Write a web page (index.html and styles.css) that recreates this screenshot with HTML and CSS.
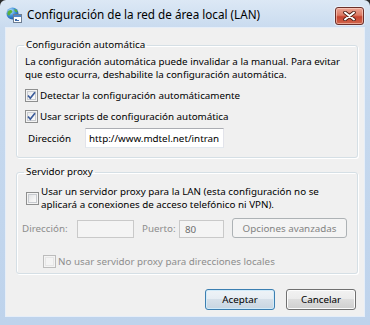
FILE: index.html
```html
<!DOCTYPE html>
<html lang="es">
<head>
<meta charset="utf-8">
<title>Configuración de la red de área local (LAN)</title>
<link rel="stylesheet" href="styles.css">
</head>
<body>
<div class="window">
  <div class="titlebar">
    <svg class="app-icon" width="16" height="16" viewBox="0 0 16 16">
      <defs>
        <radialGradient id="gl" cx="0.35" cy="0.3" r="0.8">
          <stop offset="0" stop-color="#bfe6ff"/>
          <stop offset="0.5" stop-color="#3d8fd8"/>
          <stop offset="1" stop-color="#1a4f9c"/>
        </radialGradient>
      </defs>
      <circle cx="6.5" cy="6.5" r="6" fill="url(#gl)"/>
      <path d="M3 3.5 C4.5 2.5 6 3 6.5 4.5 C6 6 4.5 6 4 7.5 C3.5 9 2.5 8.5 1.5 7.5 C1.2 6 1.8 4.5 3 3.5Z" fill="#5cb03c"/>
      <path d="M8.5 2 C10 2 11.5 3.5 11.5 5 C10.5 5.5 9.5 5 8.5 4 Z" fill="#5cb03c"/>
      <rect x="7.5" y="7.5" width="8" height="8" fill="#fdfdfd" stroke="#6f7f93"/>
      <rect x="8" y="8" width="7" height="2" fill="#4f86c9"/>
      <rect x="9" y="12" width="2" height="1" fill="#3d6aa8"/>
      <rect x="9" y="13" width="4" height="1" fill="#3d6aa8"/>
    </svg>
    <span class="title">Configuración de la red de área local (LAN)</span>
    <span class="close">
      <svg width="13" height="10" viewBox="0 0 13 10">
        <path d="M2 1.5 L11 8.5 M11 1.5 L2 8.5" stroke="#4a1c12" stroke-width="3.6" stroke-linecap="round"/>
        <path d="M2 1.5 L11 8.5 M11 1.5 L2 8.5" stroke="#ffffff" stroke-width="2" stroke-linecap="round"/>
      </svg>
    </span>
  </div>
  <div class="client">
    <fieldset class="group group-auto">
      <legend>Configuración automática</legend>
      <p class="desc">La configuración automática puede invalidar a la manual. Para evitar<br>que esto ocurra, deshabilite la configuración automática.</p>
      <div class="check check-detect">
        <span class="box checked"><svg width="9" height="9" viewBox="0 0 9 9"><path d="M1 4.5 L3.3 7.2 L8 1.2" fill="none" stroke="#3b5b9a" stroke-width="1.7"/></svg></span>
        <span class="check-text">Detectar la configuración automáticamente</span>
      </div>
      <div class="check check-scripts">
        <span class="box checked"><svg width="9" height="9" viewBox="0 0 9 9"><path d="M1 4.5 L3.3 7.2 L8 1.2" fill="none" stroke="#3b5b9a" stroke-width="1.7"/></svg></span>
        <span class="check-text">Usar scripts de configuración automática</span>
      </div>
      <div class="addr-row">
        <span class="addr-label">Dirección</span>
        <span class="textbox addr-box">http://www.mdtel.net/intran</span>
      </div>
    </fieldset>
    <fieldset class="group group-proxy">
      <legend>Servidor proxy</legend>
      <div class="check proxy-check">
        <span class="box"></span>
        <span class="check-text">Usar un servidor proxy para la LAN (esta configuración no se<br>aplicará a conexiones de acceso telefónico ni VPN).</span>
      </div>
      <div class="proxy-row">
        <span class="dis-label lbl-dir">Dirección:</span>
        <span class="textbox disabled tb-dir"></span>
        <span class="dis-label lbl-port">Puerto:</span>
        <span class="textbox disabled tb-port">80</span>
        <span class="btn btn-disabled btn-adv">Opciones avanzadas</span>
      </div>
      <div class="check local-check">
        <span class="box box-disabled"></span>
        <span class="check-text dis-text">No usar servidor proxy para direcciones locales</span>
      </div>
    </fieldset>
    <div class="buttons">
      <span class="btn btn-default">Aceptar</span>
      <span class="btn">Cancelar</span>
    </div>
  </div>
</div>
</body>
</html>
```
FILE: styles.css
```css
html, body {
  margin: 0;
  padding: 0;
  background: #2b2b2b;
}
body {
  font-family: "Noto Sans", "Open Sans", sans-serif;
  font-size: 9.8px;
  color: #000;
}
.window {
  width: 370px;
  height: 325px;
  border-radius: 6px 6px 0 0;
  background: linear-gradient(to bottom, #dce8f5 0px, #c9dbef 28px, #bed3ec 100%);
  box-sizing: border-box;
  overflow: hidden;
}
.titlebar {
  height: 28px;
  display: flex;
  align-items: center;
  padding-left: 6px;
}
.app-icon {
  flex: none;
  margin-top: 1px;
}
.title {
  margin-left: 5px;
  font-size: 11.7px;
  color: #000;
  flex: 1;
  white-space: nowrap;
}
.close {
  width: 29px;
  height: 18px;
  box-sizing: border-box;
  margin-right: 6px;
  margin-top: 4px;
  border: 1px solid #6b2f2a;
  border-radius: 3px;
  background: linear-gradient(to bottom, #eba595 0%, #dc7a64 45%, #c64330 55%, #d0664c 100%);
  box-shadow: inset 0 0 0 1px rgba(255, 220, 210, 0.55), 0 0 0 1px rgba(255, 255, 255, 0.45);
  display: flex;
  align-items: center;
  justify-content: center;
}
.client {
  margin: 0 6px;
  height: 288px;
  background: #f0f0f0;
  box-shadow: 0 0 0 1px #e6eef8;
  overflow: hidden;
}
.group {
  margin: 0 0 0 10px;
  width: 342px;
  box-sizing: border-box;
  min-width: 0;
  border: 1px solid #d5dfe5;
  border-radius: 3px;
  box-shadow: inset 1px 1px 0 #fff, 1px 1px 0 #fff;
  padding: 0;
}
.group legend {
  padding: 0 2px;
  margin-left: 7px;
  line-height: 14px;
}
.group-auto {
  margin-top: 10px;
  padding-top: 3px;
  padding-bottom: 9px;
}
.group-proxy {
  margin-top: 7px;
  padding-top: 6px;
  padding-bottom: 5px;
}
.desc {
  margin: 0 0 0 8px;
  line-height: 13px;
  white-space: nowrap;
}
.check {
  display: flex;
  align-items: center;
  line-height: 13px;
  white-space: nowrap;
}
.check-text {
  margin-left: 2px;
}
.check-detect {
  margin-top: 8px;
  padding-left: 8px;
}
.check-scripts {
  margin-top: 8px;
  padding-left: 8px;
}
.proxy-check {
  padding-left: 9px;
}
.local-check {
  margin-top: 17px;
  padding-left: 26px;
}
.box {
  width: 13px;
  height: 13px;
  box-sizing: border-box;
  flex: none;
  border: 1px solid #8e8f8f;
  background: linear-gradient(135deg, #dadcdf 0%, #f4f4f4 60%, #ffffff 100%);
  box-shadow: inset 0 0 0 1px #f4f4f4, inset 0 0 0 2px #c8cbd0;
  display: flex;
  align-items: center;
  justify-content: center;
}
.box.checked {
  background: linear-gradient(135deg, #e4e6ea 0%, #f6f6f6 60%, #ffffff 100%);
}
.box-disabled {
  border-color: #bcbcbc;
  background: #f4f4f4;
  box-shadow: inset 0 0 0 1px #f4f4f4, inset 0 0 0 2px #e6e6e6;
}
.dis-text,
.dis-label {
  color: #8d8d8d;
}
.addr-row {
  margin-top: 5px;
  display: flex;
  align-items: center;
  height: 20px;
}
.addr-label {
  margin-left: 11px;
  width: 57px;
}
.textbox {
  height: 20px;
  box-sizing: border-box;
  background: #fff;
  border: 1px solid #e2e3ea;
  border-top-color: #abadb3;
  border-bottom-color: #e3e9ef;
  padding-left: 3px;
  display: flex;
  align-items: center;
  white-space: nowrap;
  overflow: hidden;
}
.addr-box {
  width: 139px;
}
.textbox.disabled {
  height: 18px;
  background: #f4f4f4;
  border: 1px solid #c9c9c9;
  color: #6d6d6d;
}
.proxy-row {
  margin-top: 7px;
  height: 20px;
  display: flex;
  align-items: flex-end;
}
.dis-label {
  align-self: center;
  line-height: 13px;
}
.lbl-dir {
  margin-left: 5px;
  width: 55px;
}
.tb-dir {
  width: 57px;
}
.lbl-port {
  margin-left: 8px;
  width: 37px;
}
.tb-port {
  width: 45px;
  padding-left: 5px;
}
.btn {
  width: 70px;
  height: 21px;
  box-sizing: border-box;
  border: 1px solid #707070;
  border-radius: 3px;
  background: linear-gradient(to bottom, #f2f2f2 0%, #ebebeb 50%, #dddddd 50%, #cfcfcf 100%);
  box-shadow: inset 0 0 0 1px #fcfcfc;
  display: flex;
  align-items: center;
  justify-content: center;
  white-space: nowrap;
}
.btn-default {
  border-color: #3c7fb1;
  background: linear-gradient(to bottom, #eef3f7 0%, #e6edf3 50%, #d6e0e9 50%, #c8d5e1 100%);
  box-shadow: inset 0 0 0 1px #d2ebf9;
}
.btn-disabled {
  border-color: #adb2b5;
  background: #f4f4f4;
  box-shadow: none;
  color: #838383;
}
.btn-adv {
  margin-left: 8px;
  width: 115px;
  height: 20px;
}
.buttons {
  margin-top: 15px;
  display: flex;
  justify-content: flex-end;
  gap: 11px;
  padding-right: 8px;
}
```
